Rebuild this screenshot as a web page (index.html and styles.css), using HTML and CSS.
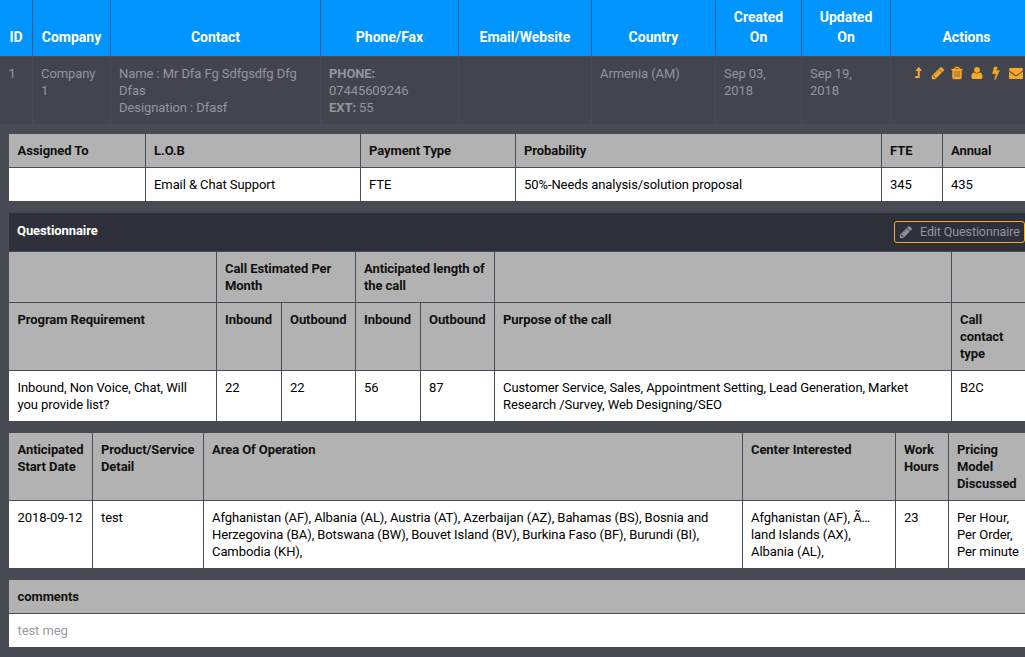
FILE: index.html
```
<!DOCTYPE html>
<html lang="en">
<head>
<meta charset="utf-8">
<title>Companies</title>
<link rel="stylesheet" href="styles.css">
</head>
<body>
<svg class="sprite" aria-hidden="true">
  <symbol id="pencil" viewBox="0 0 1792 1792"><path d="M491 1536l91-91-235-235-91 91v107h128v128h107zm523-928q0-22-22-22-10 0-17 7l-542 542q-7 7-7 17 0 22 22 22 10 0 17-7l542-542q7-7 7-17zm-54-192l416 416-832 832h-416v-416zm683 96q0 53-37 90l-166 166-416-416 166-165q36-38 90-38 53 0 91 38l235 234q37 39 37 91z"/></symbol>
</svg>
<main class="page">
  <div class="row companies head">
    <div>ID</div><div>Company</div><div>Contact</div><div>Phone/Fax</div><div>Email/Website</div><div>Country</div><div>Created<br>On</div><div>Updated<br>On</div><div>Actions</div>
  </div>
  <div class="row companies record">
    <div>1</div>
    <div>Company<br>1</div>
    <div>Name : Mr Dfa Fg Sdfgsdfg Dfg<br>Dfas<br>Designation : Dfasf</div>
    <div><b>PHONE:</b><br>07445609246<br><b>EXT:</b> 55</div>
    <div></div>
    <div>Armenia (AM)</div>
    <div>Sep 03,<br>2018</div>
    <div>Sep 19,<br>2018</div>
    <div class="actions">
      <svg viewBox="0 0 1792 1792"><path d="M1370 600q-18 40-58 40h-192v832q0 64-64 64H496q-20 0-30-18-8-20 5-35l160-192q9-11 25-11h208V640H672q-40 0-58-37-17-37 9-68l320-384q18-22 49-22t49 22l320 384q26 30 9 65z"/></svg>
      <svg class="bold-icon"><use href="#pencil"/></svg>
      <svg class="bold-icon" viewBox="0 0 1792 1792"><path d="M704 1376v-704q0-14-9-23t-23-9h-64q-14 0-23 9t-9 23v704q0 14 9 23t23 9h64q14 0 23-9t9-23zm256 0v-704q0-14-9-23t-23-9h-64q-14 0-23 9t-9 23v704q0 14 9 23t23 9h64q14 0 23-9t9-23zm256 0v-704q0-14-9-23t-23-9h-64q-14 0-23 9t-9 23v704q0 14 9 23t23 9h64q14 0 23-9t9-23zm-544-992h448l-48-117q-7-9-17-11h-317q-10 2-17 11zm928 32v64q0 14-9 23t-23 9h-96v948q0 83-47 143.5t-113 60.5h-832q-66 0-113-58.5t-47-141.5v-952h-96q-14 0-23-9t-9-23v-64q0-14 9-23t23-9h309l70-167q15-37 54-63t79-26h320q40 0 79 26t54 63l70 167h309q14 0 23 9t9 23z"/></svg>
      <svg viewBox="0 0 1792 1792"><path d="M1600 1405q0 120-73 189.500t-194 69.500h-874q-121 0-194-69.500t-73-189.500q0-53 3.500-103.500t14-109 26.500-108.500 43-97.500 62-81 85.500-53.500 111.500-20q9 0 42 21.500t74.500 48 108 48 133.500 21.500 133.500-21.500 108-48 74.500-48 42-21.500q61 0 111.500 20t85.500 53.500 62 81 43 97.500 26.500 108.500 14 109 3.500 103.500zm-320-893q0 159-112.500 271.500t-271.500 112.500-271.500-112.500-112.500-271.500 112.500-271.500 271.500-112.500 271.500 112.500 112.500 271.500z"/></svg>
      <svg class="bold-icon" viewBox="0 0 1792 1792"><path d="M1333 566q18 20 7 44l-540 1157q-13 25-42 25-4 0-14-2-17-5-25.500-19t-4.500-30l197-808-406 101q-4 1-12 1-18 0-31-11-18-15-13-39l201-825q4-14 16-23t28-9h328q19 0 32 12.500t13 29.500q0 8-5 18l-171 463 396-98q8-2 12-2 19 0 34 15z"/></svg>
      <svg viewBox="0 0 1792 1792"><path d="M1792 710v794q0 66-47 113t-113 47h-1472q-66 0-113-47t-47-113v-794q44 49 101 87 362 246 497 345 57 42 92.500 65.500t94.500 48 110 24.500h2q51 0 110-24.500t94.500-48 92.500-65.500q170-123 498-345 57-39 100-87zm0-294q0 79-49 151t-122 123q-376 261-468 325-10 7-42.500 31t-54 38.500-52 32.500-57.500 27-50 9h-2q-23 0-50-9t-57.500-27-52-32.500-54-38.500-42.500-31q-91-64-262-182.500t-205-142.500q-62-42-117-115.500t-55-136.500q0-78 41.500-130t118.500-52h1472q65 0 112.500 47t47.500 113z"/></svg>
    </div>
  </div>

  <div class="details">
    <section>
      <div class="row deal label"><div>Assigned To</div><div>L.O.B</div><div>Payment Type</div><div>Probability</div><div>FTE</div><div>Annual</div></div>
      <div class="row deal value"><div></div><div>Email &amp; Chat Support</div><div>FTE</div><div>50%-Needs analysis/solution proposal</div><div>345</div><div>435</div></div>
    </section>

    <section>
      <div class="bar">
        <strong>Questionnaire</strong>
        <a class="edit"><svg><use href="#pencil"/></svg>Edit Questionnaire</a>
      </div>
      <div class="row survey label rule"><div></div><div class="span2">Call Estimated Per<br>Month</div><div class="span2">Anticipated length of<br>the call</div><div></div><div></div></div>
      <div class="row survey label"><div>Program Requirement</div><div>Inbound</div><div>Outbound</div><div>Inbound</div><div>Outbound</div><div>Purpose of the call</div><div>Call<br>contact<br>type</div></div>
      <div class="row survey value"><div>Inbound, Non Voice, Chat, Will<br>you provide list?</div><div>22</div><div>22</div><div>56</div><div>87</div><div>Customer Service, Sales, Appointment Setting, Lead Generation, Market<br>Research /Survey, Web Designing/SEO</div><div>B2C</div></div>
    </section>

    <section>
      <div class="row scope label"><div>Anticipated<br>Start Date</div><div>Product/Service<br>Detail</div><div>Area Of Operation</div><div>Center Interested</div><div>Work<br>Hours</div><div>Pricing<br>Model<br>Discussed</div></div>
      <div class="row scope value"><div>2018-09-12</div><div>test</div><div>Afghanistan (AF), Albania (AL), Austria (AT), Azerbaijan (AZ), Bahamas (BS), Bosnia and<br>Herzegovina (BA), Botswana (BW), Bouvet Island (BV), Burkina Faso (BF), Burundi (BI),<br>Cambodia (KH),</div><div>Afghanistan (AF), Ã…<br>land Islands (AX),<br>Albania (AL),</div><div>23</div><div>Per Hour,<br>Per Order,<br>Per minute</div></div>
    </section>

    <section>
      <div class="row label"><div>comments</div></div>
      <div class="row value muted"><div>test meg</div></div>
    </section>
  </div>
</main>
</body>
</html>
```
FILE: styles.css
```
* { box-sizing: border-box; }
body {
  margin: 0;
  background: #494b54;
  color: #000;
  font: 13px/17px Roboto, sans-serif;
  letter-spacing: -0.08px;
}
.page { height: 657px; overflow: hidden; }
.sprite { position: absolute; width: 0; height: 0; }
svg { display: block; width: 14px; height: 14px; fill: currentColor; flex: none; }
.bold-icon { stroke: currentColor; stroke-width: 50px; }

.row { display: grid; }
.row > div { padding: 8px; border-left: 1px solid #4b4d58; white-space: nowrap; }
.row > div:first-child { border-left: 0; padding-left: 8.5px; }
.span2 { grid-column: span 2; }

.companies { width: 1042px; grid-template-columns: 32px 78px 210px 138px 133px 124px 86px 89px 152px; }
.head {
  height: 56px;
  background: #0095ff;
  color: #fff;
  font-size: 14px;
  line-height: 20px;
  letter-spacing: 0;
  font-weight: 700;
  text-align: center;
}
.row.head > div {
  display: flex;
  align-items: flex-end;
  justify-content: center;
  padding: 0 8px 9px;
  border-left-color: #2c6195;
}
.row.head > div:first-child { padding: 0 8px 9px; }
.record {
  height: 68px;
  background: #43454e;
  color: #93959c;
  border-top: 1px solid #494b54;
}
.row.record > div { border-left-color: #494b58; }
.row.record > .actions { display: flex; gap: 5.6px; padding: 9px 0 0 20px; color: #f9a825; }

.details { padding: 10px 0 0 9px; display: flex; flex-direction: column; gap: 12px; }
.deal { grid-template-columns: 136px 215px 155px 366px 61px 1fr; }
.survey { grid-template-columns: 207px 65px 74px 65px 74px 457px 1fr; }
.scope { grid-template-columns: 83px 111px 539px 153px 53px 1fr; }
.label { background: #b2b2b2; font-weight: 700; color: #111; }
.value { background: #fff; border-top: 1px solid #494b58; }
.rule { border-bottom: 1px solid #494b58; }
.muted { color: #999ca1; }

.bar {
  height: 39px;
  display: flex;
  justify-content: space-between;
  background: #2f313a;
  color: #fff;
  padding: 8px 0 0 8px;
  border-bottom: 1px solid #494b58;
}
.bar strong { padding-top: 1px; }
.edit {
  display: flex;
  align-items: center;
  width: 131px;
  height: 22px;
  padding: 0 0 1px 4px;
  gap: 7px;
  border: 1px solid #f9a825;
  border-radius: 3px;
  color: #93959c;
  font-size: 12.5px;
  letter-spacing: -0.1px;
  white-space: nowrap;
}
```
